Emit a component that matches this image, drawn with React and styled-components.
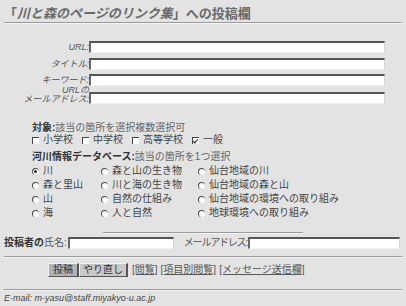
import React from "react";
import styled, { createGlobalStyle } from "styled-components";

const GlobalStyle = createGlobalStyle`
  html, body {
    margin: 0;
    padding: 0;
    background: #e3e3e3;
  }
  body {
    font-family: "Liberation Sans", "Noto Sans CJK JP", sans-serif;
    font-size: 10px;
    line-height: 12px;
    color: #4a4a4a;
  }
`;

const Page = styled.div`
  width: 406px;
  height: 306px;
  padding: 0 4px;
  box-sizing: border-box;
  overflow: hidden;
`;

const Title = styled.h1`
  margin: 0;
  padding-top: 5px;
  height: 17px;
  font-size: 13px;
  line-height: 17px;
  font-weight: bold;
  color: #6a6a6a;

  em {
    font-style: italic;
  }
`;

const Rule = styled.hr`
  margin: ${(p) => p.$gap || "0"};
  width: ${(p) => p.$width || "auto"};
  border: none;
  border-top: 1px solid #9a9a9a;
  border-bottom: 1px solid #f4f4f4;
  height: 0;
`;

const FieldGrid = styled.div`
  display: grid;
  grid-template-columns: 85px 296px;
  align-items: end;
  margin-top: 17px;
`;

const FieldLabel = styled.label`
  font-style: italic;
  font-size: 9px;
  line-height: ${(p) => (p.$twoLine ? "9px" : "10px")};
  color: #555;
  text-align: right;
  padding-bottom: ${(p) => (p.$twoLine ? "0" : "1px")};
  margin-top: ${(p) => p.$top || "4px"};
`;

const TextInput = styled.input`
  display: block;
  box-sizing: border-box;
  width: ${(p) => p.$width || "296px"};
  flex: none;
  height: 12px;
  margin: 0;
  margin-top: ${(p) => p.$top || "4px"};
  padding: 0 2px;
  background: #fff;
  border-top: 2px solid #555;
  border-left: 2px solid #666;
  border-right: 1px solid #d4d4d4;
  border-bottom: 1px solid #f2f2f2;
  font-size: 10px;
  outline: none;
`;

const Section = styled.div`
  padding-left: 28px;
  margin-top: ${(p) => p.$top || "0"};
`;

const Heading = styled.div`
  height: 11px;
  line-height: 11px;
  color: #666;
  white-space: nowrap;

  b {
    color: #333;
    font-weight: bold;
  }
`;

const CheckRow = styled.div`
  display: flex;
  gap: 9px;
`;

const Choice = styled.label`
  display: flex;
  align-items: center;
  gap: 4px;
  height: 14px;
  line-height: 14px;
  color: #444;
  white-space: nowrap;
`;

const Box = styled.span`
  position: relative;
  width: 7px;
  height: 7px;
  box-sizing: border-box;
  background: #fff;
  border-top: 1px solid #444;
  border-left: 1px solid #444;
  border-radius: ${(p) => (p.$round ? "50%" : "0")};
  flex: none;

  &::after {
    content: "";
    display: ${(p) => (p.$checked ? "block" : "none")};
    position: absolute;
    ${(p) =>
      p.$round
        ? `left: 1px; top: 1px; width: 3px; height: 3px; border-radius: 50%; background: #222;`
        : `left: 1px; top: 0px; width: 2px; height: 4px; border: solid #222; border-width: 0 1px 1px 0; transform: rotate(40deg);`}
  }
`;

const RadioGrid = styled.div`
  display: grid;
  grid-template-columns: 69px 97px auto;
  margin-top: 2px;
`;

const PosterRow = styled.div`
  display: flex;
  align-items: center;
  margin-top: 2px;
  height: 14px;
  white-space: nowrap;
`;

const PosterLabel = styled.span`
  margin-left: ${(p) => p.$left || "0"};
  margin-right: 1px;
  letter-spacing: ${(p) => p.$tight || "0"};
  color: #555;
  flex: none;

  b {
    color: #333;
  }
`;

const ButtonRow = styled.div`
  display: flex;
  align-items: center;
  padding-left: 44px;
  height: 14px;
  margin-top: 5px;
  gap: 4px;
  white-space: nowrap;
`;

const Buttons = styled.div`
  display: flex;
`;

const Button = styled.button`
  height: 14px;
  padding: 0 ${(p) => p.$pad || "4px"};
  margin: 0;
  font-family: inherit;
  font-size: 10px;
  line-height: 12px;
  color: #333;
  background: ${(p) => (p.$dark ? "#b3b3b3" : "#c9c9c9")};
  border: 1px solid #f0f0f0;
  border-right: 2px solid #555;
  border-bottom: 1px solid #555;
`;

const NavLink = styled.a`
  color: #555;
  font-size: 10px;
  text-decoration: underline;
  cursor: pointer;
  margin-right: 3px;
`;

const Footer = styled.div`
  margin-top: 2px;
  font-style: italic;
  font-size: 9px;
  line-height: 10px;
  color: #444;
`;

const schools = ["小学校", "中学校", "高等学校", "一般"];

const rivers = [
  ["川", "森と山の生き物", "仙台地域の川"],
  ["森と里山", "川と海の生き物", "仙台地域の森と山"],
  ["山", "自然の仕組み", "仙台地域の環境への取り組み"],
  ["海", "人と自然", "地球環境への取り組み"],
];

const App = () => {
  return (
    <Page>
      <GlobalStyle />
      <Title>
        「<em>川と森のページのリンク集</em>」への投稿欄
      </Title>
      <Rule />

      <FieldGrid>
        <FieldLabel $top="0">URL:</FieldLabel>
        <TextInput $top="0" />
        <FieldLabel $top="5px">タイトル:</FieldLabel>
        <TextInput $top="5px" />
        <FieldLabel>キーワード:</FieldLabel>
        <TextInput />
        <FieldLabel $twoLine $top="-1px">
          URLの
          <br />
          メールアドレス:
        </FieldLabel>
        <TextInput $top="6px" />
      </FieldGrid>

      <Section $top="18px">
        <Heading>
          <b>対象:</b>該当の箇所を選択複数選択可
        </Heading>
        <CheckRow>
          {schools.map((s) => (
            <Choice key={s}>
              <Box $checked={s === "一般"} />
              {s}
            </Choice>
          ))}
        </CheckRow>
      </Section>

      <Section $top="4px">
        <Heading>
          <b>河川情報データベース:</b>該当の箇所を1つ選択
        </Heading>
        <RadioGrid>
          {rivers.flat().map((r) => (
            <Choice key={r}>
              <Box $round $checked={r === "川"} />
              {r}
            </Choice>
          ))}
        </RadioGrid>
      </Section>

      <Rule $width="200px" $gap="12px auto 0" />

      <PosterRow>
        <PosterLabel>
          <b>投稿者の</b>氏名:
        </PosterLabel>
        <TextInput $top="0" $width="106px" />
        <PosterLabel $left="10px" $tight="-1.2px">
          メールアドレス:
        </PosterLabel>
        <TextInput $top="0" $width="152px" />
      </PosterRow>

      <Rule $gap="6px 0 0" />

      <ButtonRow>
        <Buttons>
          <Button $dark>投稿</Button>
          <Button $pad="3px">やり直し</Button>
        </Buttons>
        <span>
          <NavLink>[閲覧]</NavLink>
          <NavLink>[項目別閲覧]</NavLink>
          <NavLink>[メッセージ送信欄]</NavLink>
        </span>
      </ButtonRow>

      <Rule $gap="12px 0 0" />

      <Footer>E-mail: m-yasu@staff.miyakyo-u.ac.jp</Footer>
    </Page>
  );
};

export default App;
